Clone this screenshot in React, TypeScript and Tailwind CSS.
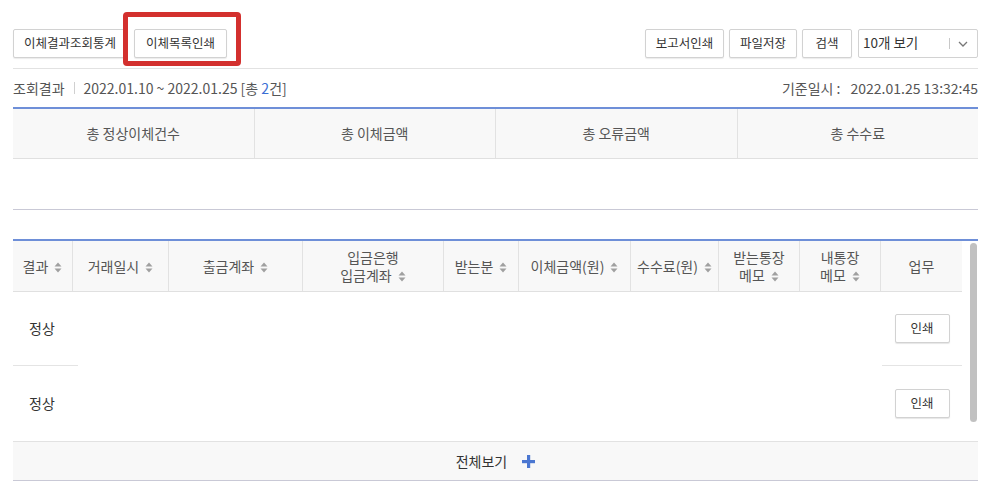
import { ReactNode } from "react";

function SortIcon() {
  return (
    <svg width="8" height="11" viewBox="0 0 8 11" className="inline-block ml-[6px] align-[-1px]">
      <path d="M4 0.5 L7.5 4.5 H0.5 Z" fill="#a0a0a0" />
      <path d="M4 10.5 L7.5 6.5 H0.5 Z" fill="#a0a0a0" />
    </svg>
  );
}

function Btn({ children, w }: { children: ReactNode; w: string }) {
  return (
    <button
      className={`${w} h-[29px] border border-[#d2d2d2] bg-white text-[12.5px] text-[#333] rounded-[2px] shadow-[0_1px_1px_rgba(0,0,0,0.08)]`}
    >
      {children}
    </button>
  );
}

export default function App() {
  const summary = ["총 정상이체건수", "총 이체금액", "총 오류금액", "총 수수료"];

  const columns = [
    { w: "w-[59px]", lines: ["결과"], sort: true },
    { w: "w-[96px]", lines: ["거래일시"], sort: true },
    { w: "w-[134px]", lines: ["출금계좌"], sort: true },
    { w: "w-[141px]", lines: ["입금은행", "입금계좌"], sort: true },
    { w: "w-[75px]", lines: ["받는분"], sort: true },
    { w: "w-[112px]", lines: ["이체금액(원)"], sort: true },
    { w: "w-[88px]", lines: ["수수료(원)"], sort: true },
    { w: "w-[81px]", lines: ["받는통장", "메모"], sort: true },
    { w: "w-[81px]", lines: ["내통장", "메모"], sort: true },
    { w: "w-[82px]", lines: ["업무"], sort: false },
  ];

  const rows = ["정상", "정상"];

  return (
    <div
      className="relative w-[994px] h-[495px] bg-white overflow-hidden text-[#444]"
      style={{ fontFamily: '"Noto Sans CJK KR", "Noto Sans", sans-serif' }}
    >
      <div className="pl-[13px] pr-[16px]">
        {/* top buttons */}
        <div className="flex justify-between items-start pt-[29px] pb-[10px] border-b border-[#e2e2e2]">
          <div className="flex gap-[7px]">
            <Btn w="w-[114px]">이체결과조회통계</Btn>
            <Btn w="w-[93px]">이체목록인쇄</Btn>
          </div>
          <div className="flex gap-[5px]">
            <Btn w="w-[79px]">보고서인쇄</Btn>
            <Btn w="w-[68px]">파일저장</Btn>
            <Btn w="w-[50px]">검색</Btn>
            <div className="ml-[1px] w-[120px] h-[29px] border border-[#d2d2d2] bg-white flex items-start justify-between pl-[4px] pr-[9px] rounded-[2px]">
              <span className="text-[13.5px] text-[#333] leading-[24px]">10개 보기</span>
              <div className="flex items-center h-full gap-[8px]">
                <span className="w-px h-[11px] bg-[#c8c8c8]" />
                <svg width="10" height="6" viewBox="0 0 10 6">
                  <polyline points="1,1 5,5 9,1" fill="none" stroke="#777" strokeWidth="1.3" />
                </svg>
              </div>
            </div>
          </div>
        </div>

        {/* info row */}
        <div className="flex justify-between items-center h-[38px] text-[14px]">
          <div className="flex items-center">
            <span className="text-[#555]">조회결과</span>
            <span className="w-px h-[12px] bg-[#d0d0d0] mx-[9px]" />
            <span className="text-[#555]">
              2022.01.10 ~ 2022.01.25 [총 <span className="text-[#3b6fd4]">2</span>건]
            </span>
          </div>
          <div className="flex items-center text-[#555]">
            <span>기준일시 :</span>
            <span className="ml-[10px]">2022.01.25 13:32:45</span>
          </div>
        </div>

        {/* summary table */}
        <div className="border-t-2 border-[#6e8fd8]">
          <div className="flex h-[50px] bg-[#f8f8f8] border-b border-[#e0e0e0]">
            {summary.map((s, i) => (
              <div
                key={s}
                className={`flex-1 flex items-center justify-center text-[14px] text-[#555] ${
                  i > 0 ? "border-l border-[#e2e2e2]" : ""
                }`}
              >
                {s}
              </div>
            ))}
          </div>
          <div className="h-[51px] border-b border-[#c9c9d6]" />
        </div>

        {/* main table */}
        <div className="mt-[29px] border-t-2 border-[#6e8fd8]">
          <div className="flex h-[200px]">
            <div className="w-[949px] flex flex-col">
              <div className="flex h-[51px] bg-[#f8f8f8] border-b border-[#e0e0e0]">
                {columns.map((c, i) => (
                  <div
                    key={i}
                    className={`${c.w} flex flex-col items-center justify-center text-[14px] text-[#555] leading-[18px] text-center ${
                      i > 0 ? "border-l border-[#e2e2e2]" : ""
                    }`}
                  >
                    {c.lines.map((l, j) => (
                      <span key={j} className="whitespace-nowrap">
                        {l}
                        {c.sort && j === c.lines.length - 1 && <SortIcon />}
                      </span>
                    ))}
                  </div>
                ))}
              </div>
              {rows.map((r, i) => (
                <div key={i} className="flex h-[74px]">
                  <div
                    className={`w-[65px] flex items-center pl-[16px] text-[14px] text-[#333] ${
                      i === 0 ? "border-b border-[#e4e4e4]" : ""
                    }`}
                  >
                    {r}
                  </div>
                  <div className="flex-1" />
                  <div
                    className={`w-[80px] flex items-center justify-center ${
                      i === 0 ? "border-b border-[#e4e4e4]" : ""
                    }`}
                  >
                    <button className="w-[55px] h-[29px] border border-[#d2d2d2] bg-white text-[12.5px] text-[#333] rounded-[2px] shadow-[0_1px_1px_rgba(0,0,0,0.1)]">
                      인쇄
                    </button>
                  </div>
                </div>
              ))}
            </div>
            <div className="flex-1 pl-[8px] pt-[2px]">
              <div className="w-[7px] h-[179px] rounded-full bg-[#c1c1c1]" />
            </div>
          </div>
          <div className="flex items-center justify-center h-[40px] bg-[#f8f8f8] border-t border-[#e2e2e2] border-b border-b-[#c9c9d6] text-[14px] text-[#333]">
            <span>전체보기</span>
            <svg width="13" height="13" viewBox="0 0 13 13" className="ml-[15px]">
              <rect x="5" y="0" width="3.2" height="13" fill="#4b77d1" />
              <rect x="0" y="5" width="13" height="3.2" fill="#4b77d1" />
            </svg>
          </div>
        </div>
      </div>

      {/* highlight annotation */}
      <div className="absolute left-[123px] top-[12px] w-[118px] h-[54px] border-[5px] border-[#d3302e] rounded-[4px]" />
    </div>
  );
}
